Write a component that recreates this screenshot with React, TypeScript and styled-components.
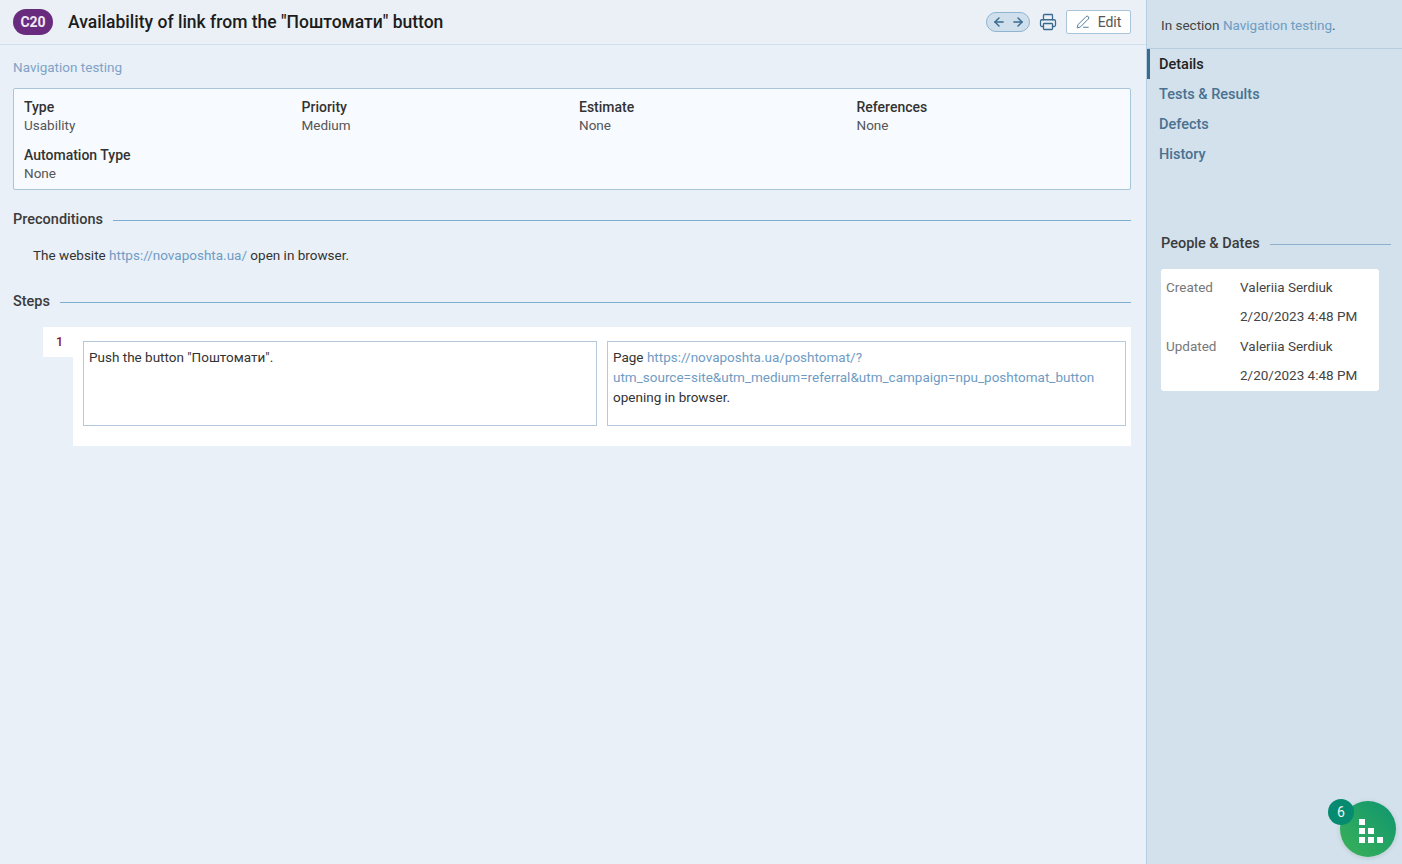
import React from "react";
import styled, { createGlobalStyle } from "styled-components";
import { ArrowLeft, ArrowRight, Printer, PenLine } from "lucide-react";

const GlobalStyle = createGlobalStyle`
  html, body {
    margin: 0;
    padding: 0;
    height: 100%;
    overflow: hidden;
  }
  body {
    font-family: Roboto, "Liberation Sans", sans-serif;
    font-size: 13.5px;
    color: #333;
    background: #e9f0f7;
  }
  #root {
    height: 100%;
  }
`;

const Page = styled.div`
  display: flex;
  height: 864px;
  width: 1402px;
  position: relative;
`;

const Main = styled.main`
  width: 1146px;
  flex: none;
  background: #e9f0f7;
`;

const Header = styled.header`
  height: 44px;
  display: flex;
  align-items: center;
  padding: 0 15px 0 13px;
  border-bottom: 1px solid #d0e0ec;
  background: #eaf0f6;
`;

const CaseBadge = styled.span`
  width: 40px;
  height: 26px;
  border-radius: 13px;
  background: #692b7e;
  color: #f2e8f5;
  font-size: 14px;
  font-weight: 700;
  display: flex;
  align-items: center;
  justify-content: center;
  flex: none;
`;

const Title = styled.h1`
  margin: 0 0 0 15px;
  font-size: 17.5px;
  font-weight: 500;
  color: #1c1c1c;
  flex: 1;
`;

const NavPill = styled.div`
  width: 42px;
  height: 18px;
  border: 1px solid #8fb4d0;
  border-radius: 10px;
  background: #cfe0ec;
  display: flex;
  align-items: center;
  justify-content: center;
  gap: 5px;
  color: #3a6a8e;
  margin-right: 9px;
  box-sizing: content-box;
  width: 42px;
`;

const PrintButton = styled.span`
  display: flex;
  color: #3a6a8e;
  margin-right: 9px;
`;

const EditButton = styled.button`
  width: 65px;
  height: 24px;
  display: flex;
  align-items: center;
  justify-content: center;
  gap: 8px;
  padding: 0;
  background: #fff;
  border: 1px solid #a9c5da;
  border-radius: 2px;
  color: #555;
  font: inherit;
  font-size: 14px;

  svg {
    color: #3a6a8e;
  }
`;

const Content = styled.div`
  padding: 0 15px 0 13px;
`;

const LinkText = styled.a`
  color: #6f9cc4;
  text-decoration: none;
`;

const SectionPath = styled.div`
  height: 43px;
  display: flex;
  align-items: center;
  color: #7fa3c7;
  line-height: 40px;
`;

const InfoCard = styled.div`
  height: 102px;
  box-sizing: border-box;
  background: #f7fbff;
  border: 1px solid #a9c5da;
  border-radius: 2px;
  padding: 10px 10px 0;
  display: grid;
  grid-template-columns: 277.5px 277.5px 277.5px 1fr;
  grid-template-rows: 48px 38px;
`;

const InfoLabel = styled.div`
  font-weight: 500;
  color: #333;
  font-size: 14px;
  line-height: 17px;
`;

const InfoValue = styled.div`
  color: #555;
  line-height: 19px;
  font-size: 13.5px;
`;

const SectionHeading = styled.div<{ $top: number }>`
  display: flex;
  align-items: center;
  gap: 10px;
  margin-top: ${(p) => p.$top}px;
  font-size: 14.5px;
  font-weight: 500;
  color: #3b3b3b;
  line-height: 20px;

  &::after {
    content: "";
    flex: 1;
    height: 1px;
    background: #7fafd0;
  }
`;

const Paragraph = styled.p`
  margin: 15px 0 0 20px;
  line-height: 20px;
  color: #333;
`;

const StepsArea = styled.div`
  display: flex;
  align-items: flex-start;
  margin: 15px 0 0 30px;
`;

const StepNumber = styled.div`
  width: 30px;
  height: 30px;
  flex: none;
  box-sizing: border-box;
  background: #fff;
  color: #8a1030;
  font-weight: 500;
  font-size: 12.5px;
  padding: 7px 0 0 13px;
`;

const StepBody = styled.div`
  flex: 1;
  background: #fff;
  height: 119px;
  box-sizing: border-box;
  padding: 14px 5px 0 10px;
  display: grid;
  grid-template-columns: 514px 519px;
  gap: 10px;
`;

const StepCell = styled.div`
  height: 85px;
  box-sizing: border-box;
  border: 1px solid #b4c9db;
  padding: 5px;
  line-height: 20px;
  color: #333;
  font-size: 13.5px;
`;

const Sidebar = styled.aside`
  width: 255px;
  flex: none;
  background: #d2e1eb;
  border-left: 1px solid #b7cfe0;
`;

const SectionNote = styled.div`
  height: 49px;
  box-sizing: border-box;
  padding: 15px 0 0 14px;
  line-height: 20px;
  border-bottom: 1px solid #b5cde0;
  color: #444;
`;

const NavList = styled.nav`
  display: flex;
  flex-direction: column;
`;

const NavItem = styled.div<{ $active?: boolean }>`
  height: 30px;
  display: flex;
  align-items: center;
  box-sizing: border-box;
  padding-left: ${(p) => (p.$active ? "9px" : "9px")};
  border-left: 3px solid ${(p) => (p.$active ? "#3a6a8e" : "transparent")};
  margin-left: 0;
  font-size: 14.5px;
  font-weight: 500;
  color: ${(p) => (p.$active ? "#222" : "#4a7191")};
`;

const PeopleSection = styled.section`
  margin: 65px 11px 0 14px;
`;

const PeopleHeading = styled(SectionHeading)`
  margin-top: 0;
  &::after {
    background: #8fb0cc;
  }
`;

const PeopleCard = styled.div`
  width: 218px;
  height: 122px;
  margin-top: 15px;
  background: #fff;
  border-radius: 3px;
  box-sizing: border-box;
  padding: 3px 5px 0;
  display: grid;
  grid-template-columns: 74px 1fr;
  grid-auto-rows: 29.5px;
  align-items: center;
  line-height: 20px;
`;

const PeopleLabel = styled.span`
  color: #777;
`;

const PeopleValue = styled.span`
  color: #444;
`;

const WidgetButton = styled.div`
  position: absolute;
  left: 1340px;
  top: 801px;
  width: 56px;
  height: 56px;
  border-radius: 50%;
  background: linear-gradient(45deg, #3bb257, #0f9570);
  box-shadow: 0 1px 5px rgba(0, 0, 0, 0.12);
  display: flex;
  align-items: center;
  justify-content: center;
`;

const WidgetCount = styled.div`
  position: absolute;
  left: 1328px;
  top: 799px;
  width: 26px;
  height: 26px;
  border-radius: 50%;
  background: #068a70;
  color: #e8f6f1;
  font-size: 14px;
  display: flex;
  align-items: center;
  justify-content: center;
`;

function WidgetGlyph() {
  const squares = [
    [0, 0],
    [0, 9],
    [9, 9],
    [0, 18],
    [9, 18],
    [18, 18],
  ];
  return (
    <svg width="24" height="24" viewBox="0 0 24 24" style={{ marginLeft: 5, marginTop: 3 }}>
      {squares.map(([x, y]) => (
        <rect key={`${x}-${y}`} x={x} y={y} width="6" height="6" fill="#fff" />
      ))}
    </svg>
  );
}

export default function App() {
  return (
    <Page>
      <GlobalStyle />
      <Main>
        <Header>
          <CaseBadge>C20</CaseBadge>
          <Title>Availability of link from the "Поштомати" button</Title>
          <NavPill>
            <ArrowLeft size={14} strokeWidth={2.5} />
            <ArrowRight size={14} strokeWidth={2.5} />
          </NavPill>
          <PrintButton>
            <Printer size={18} strokeWidth={1.7} />
          </PrintButton>
          <EditButton>
            <PenLine size={14} strokeWidth={1.5} />
            Edit
          </EditButton>
        </Header>
        <Content>
          <SectionPath>Navigation testing</SectionPath>
          <InfoCard>
            <div>
              <InfoLabel>Type</InfoLabel>
              <InfoValue>Usability</InfoValue>
            </div>
            <div>
              <InfoLabel>Priority</InfoLabel>
              <InfoValue>Medium</InfoValue>
            </div>
            <div>
              <InfoLabel>Estimate</InfoLabel>
              <InfoValue>None</InfoValue>
            </div>
            <div>
              <InfoLabel>References</InfoLabel>
              <InfoValue>None</InfoValue>
            </div>
            <div>
              <InfoLabel>Automation Type</InfoLabel>
              <InfoValue>None</InfoValue>
            </div>
          </InfoCard>
          <SectionHeading $top={20}>Preconditions</SectionHeading>
          <Paragraph>
            The website <LinkText href="#">https://novaposhta.ua/</LinkText> open in browser.
          </Paragraph>
          <SectionHeading $top={27}>Steps</SectionHeading>
          <StepsArea>
            <StepNumber>1</StepNumber>
            <StepBody>
              <StepCell>Push the button "Поштомати".</StepCell>
              <StepCell>
                Page{" "}
                <LinkText href="#">
                  https://novaposhta.ua/poshtomat/?
                  <br />
                  utm_source=site&amp;utm_medium=referral&amp;utm_campaign=npu_poshtomat_button
                </LinkText>
                <br />
                opening in browser.
              </StepCell>
            </StepBody>
          </StepsArea>
        </Content>
      </Main>
      <Sidebar>
        <SectionNote>
          In section <LinkText href="#">Navigation testing</LinkText>.
        </SectionNote>
        <NavList>
          <NavItem $active>Details</NavItem>
          <NavItem>Tests &amp; Results</NavItem>
          <NavItem>Defects</NavItem>
          <NavItem>History</NavItem>
        </NavList>
        <PeopleSection>
          <PeopleHeading $top={0}>People &amp; Dates</PeopleHeading>
          <PeopleCard>
            <PeopleLabel>Created</PeopleLabel>
            <PeopleValue>Valeriia Serdiuk</PeopleValue>
            <span />
            <PeopleValue>2/20/2023 4:48 PM</PeopleValue>
            <PeopleLabel>Updated</PeopleLabel>
            <PeopleValue>Valeriia Serdiuk</PeopleValue>
            <span />
            <PeopleValue>2/20/2023 4:48 PM</PeopleValue>
          </PeopleCard>
        </PeopleSection>
      </Sidebar>
      <WidgetButton>
        <WidgetGlyph />
      </WidgetButton>
      <WidgetCount>6</WidgetCount>
    </Page>
  );
}
